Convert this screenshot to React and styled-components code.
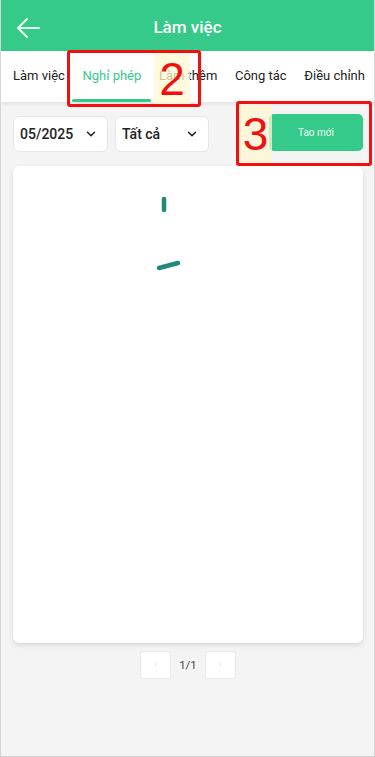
import styled, { createGlobalStyle } from "styled-components";

const GlobalStyle = createGlobalStyle`
  html, body { margin: 0; padding: 0; }
  body { font-family: Roboto, "Liberation Sans", Arial, sans-serif; background: #f4f4f4; }
`;

const GREEN = "#35c98a";

const Screen = styled.div`
  position: relative;
  width: 375px;
  height: 757px;
  box-sizing: border-box;
  border: 1px solid #d6d6d6;
  border-top: none;
  background: #f4f4f4;
  display: flex;
  flex-direction: column;
  overflow: hidden;
`;

const Header = styled.header`
  height: 51px;
  padding-top: 3px;
  box-sizing: border-box;
  background: ${GREEN};
  display: flex;
  align-items: center;
  justify-content: center;
  position: relative;
  color: #fff;
  font-size: 17px;
  font-weight: 500;
  flex-shrink: 0;
`;

const BackButton = styled.button`
  position: absolute;
  left: 12px;
  top: 14px;
  width: 30px;
  height: 28px;
  padding: 0;
  border: none;
  background: none;
  display: flex;
  align-items: center;
  justify-content: center;
`;

const Tabs = styled.nav`
  height: 51px;
  background: #fff;
  display: flex;
  align-items: stretch;
  justify-content: space-between;
  padding: 0 9px 0 12px;
  box-shadow: 0 2px 4px rgba(0, 0, 0, 0.08);
  position: relative;
  z-index: 1;
  flex-shrink: 0;
`;

const Tab = styled.div`
  position: relative;
  display: flex;
  align-items: center;
  font-size: 13px;
  color: ${p => (p.$active ? GREEN : "#222")};
  padding-bottom: 2px;
  &::after {
    content: "";
    display: ${p => (p.$active ? "block" : "none")};
    position: absolute;
    left: -10px;
    right: -10px;
    bottom: 0;
    height: 3px;
    border-radius: 2px;
    background: ${GREEN};
  }
`;

const Body = styled.main`
  flex: 1;
  display: flex;
  flex-direction: column;
  padding: 12px 11px 0 12px;
`;

const Toolbar = styled.div`
  display: flex;
  align-items: center;
  gap: 7px;
  height: 40px;
`;

const Select = styled.div`
  width: ${p => p.$w}px;
  height: 36px;
  box-sizing: border-box;
  background: #fff;
  border: 1px solid #e6e6e6;
  border-radius: 6px;
  display: flex;
  align-items: center;
  justify-content: space-between;
  padding: 0 9px 0 6px;
  font-size: 14px;
  font-weight: 500;
  color: #222;
`;

const CreateButton = styled.button`
  margin-left: auto;
  width: 94px;
  height: 37px;
  border: none;
  border-radius: 5px;
  background: ${GREEN};
  color: #e9fff4;
  font-family: inherit;
  font-size: 10px;
  margin-top: -3px;
`;

const Card = styled.section`
  margin-top: 12px;
  height: 477px;
  background: #fff;
  border-radius: 6px;
  box-shadow: 0 2px 5px rgba(0, 0, 0, 0.12);
  position: relative;
`;

const Loader = styled.svg`
  position: absolute;
  left: 127px;
  top: 27px;
`;

const Pager = styled.div`
  margin-top: 8px;
  display: flex;
  justify-content: center;
  align-items: center;
  gap: 8px;
  font-size: 11.5px;
  color: #444;
`;

const PageBtn = styled.div`
  width: 31px;
  height: 28px;
  background: #fff;
  border: 1px solid #eaeaea;
  border-radius: 3px;
  box-sizing: border-box;
  display: flex;
  align-items: center;
  justify-content: center;
  color: #ccc;
  font-size: 7px;
`;

const Marker = styled.div`
  position: absolute;
  left: ${p => p.$x}px;
  top: ${p => p.$y}px;
  width: ${p => p.$w}px;
  height: ${p => p.$h}px;
  box-sizing: border-box;
  border: 3px solid #f01010;
  border-radius: 3px;
  z-index: 5;
  pointer-events: none;
`;

const MarkerLabel = styled.span`
  position: absolute;
  top: 0;
  ${p => (p.$right ? `right: ${p.$right}px;` : "left: 0;")}
  width: ${p => p.$w}px;
  height: 100%;
  background: rgba(255, 248, 210, 0.75);
  color: #f01010;
  font-family: "Liberation Sans", Arial, sans-serif;
  font-size: 46px;
  line-height: 1;
  display: flex;
  align-items: center;
  justify-content: center;
`;

function Chevron() {
  return (
    <svg width="14" height="14" viewBox="0 0 24 24" fill="none" stroke="#222" strokeWidth="2.6" strokeLinecap="round" strokeLinejoin="round">
      <path d="M6 9l6 6 6-6" />
    </svg>
  );
}

export default function App() {
  const tabs = ["Làm việc", "Nghỉ phép", "Làm thêm", "Công tác", "Điều chỉnh"];
  return (
    <>
      <GlobalStyle />
      <Screen>
        <Header>
          <BackButton>
            <svg width="26" height="22" viewBox="0 0 26 22" fill="none" stroke="#e8fff3" strokeWidth="2" strokeLinecap="round" strokeLinejoin="round">
              <path d="M24 11H3M12 2L3 11l9 9" />
            </svg>
          </BackButton>
          Làm việc
        </Header>
        <Tabs>
          {tabs.map((t, i) => (
            <Tab key={t} $active={i === 1}>{t}</Tab>
          ))}
        </Tabs>
        <Body>
          <Toolbar>
            <Select $w={95}>05/2025<Chevron /></Select>
            <Select $w={94}>Tất cả<Chevron /></Select>
            <CreateButton>Tao mới</CreateButton>
          </Toolbar>
          <Card>
            <Loader width="50" height="80" viewBox="0 0 50 80">
              <path d="M24 6v11" stroke="#1f8a78" strokeWidth="4.5" strokeLinecap="round" />
              <path d="M19 75l19-5" stroke="#1f8a78" strokeWidth="4.5" strokeLinecap="round" />
            </Loader>
          </Card>
          <Pager>
            <PageBtn>‹</PageBtn>
            <span>1/1</span>
            <PageBtn>›</PageBtn>
          </Pager>
        </Body>
        <Marker $x={66} $y={50} $w={134} $h={57}>
          <MarkerLabel $right={8} $w={36}>2</MarkerLabel>
        </Marker>
        <Marker $x={235} $y={101} $w={136} $h={65}>
          <MarkerLabel $w={33}>3</MarkerLabel>
        </Marker>
      </Screen>
    </>
  );
}
